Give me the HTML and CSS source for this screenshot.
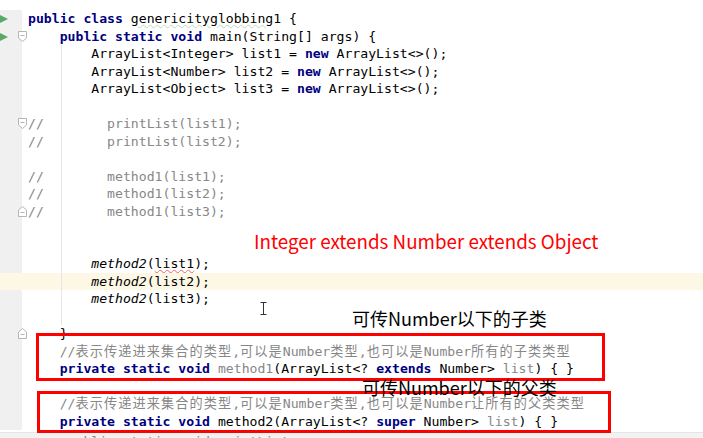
FILE: index.html
```html
<!DOCTYPE html>
<html lang="en">
<head>
    <meta charset="UTF-8">
    <meta name="viewport" content="width=device-width, initial-scale=1.0">
    <title>genericityglobbing1</title>
    <link rel="stylesheet" href="styles.css">
</head>
<body>
    <div class="editor">
        <div class="line">
            <span class="gut"><svg class="run" width="8" height="8" viewBox="0 0 8 8"><path d="M0 0 L8 4 L0 8 Z"/></svg></span>
            <span class="code"><b>public class</b> <span class="typo">genericityglobbing</span>1 {</span>
        </div>
        <div class="line">
            <span class="gut"><svg class="run" width="8" height="8" viewBox="0 0 8 8"><path d="M0 0 L8 4 L0 8 Z"/></svg><svg class="fold" width="9" height="11" viewBox="0 0 9 11"><path d="M0.5 0.5 H8.5 V7 L4.5 10.5 L0.5 7 Z"/><path d="M2.5 4.5 H6.5"/></svg></span>
            <span class="code">    <b>public static void</b> main(String[] args) {</span>
        </div>
        <div class="line g"><span class="gut"></span><span class="code">        ArrayList&lt;Integer&gt; list1 = <b>new</b> ArrayList&lt;&gt;();</span></div>
        <div class="line g"><span class="gut"></span><span class="code">        ArrayList&lt;Number&gt; list2 = <b>new</b> ArrayList&lt;&gt;();</span></div>
        <div class="line g"><span class="gut"></span><span class="code">        ArrayList&lt;Object&gt; list3 = <b>new</b> ArrayList&lt;&gt;();</span></div>
        <div class="line g"><span class="gut"></span><span class="code"> </span></div>
        <div class="line g">
            <span class="gut"><svg class="fold" width="9" height="11" viewBox="0 0 9 11"><path d="M0.5 0.5 H8.5 V7 L4.5 10.5 L0.5 7 Z"/><path d="M2.5 4.5 H6.5"/></svg></span>
            <span class="code rem">//        printList(list1);</span>
        </div>
        <div class="line g"><span class="gut"></span><span class="code rem">//        printList(list2);</span></div>
        <div class="line g"><span class="gut"></span><span class="code"> </span></div>
        <div class="line g"><span class="gut"></span><span class="code rem">//        method1(list1);</span></div>
        <div class="line g"><span class="gut"></span><span class="code rem">//        method1(list2);</span></div>
        <div class="line g">
            <span class="gut"><svg class="fold" width="9" height="11" viewBox="0 0 9 11"><path d="M0.5 10.5 H8.5 V4 L4.5 0.5 L0.5 4 Z"/><path d="M2.5 6.5 H6.5"/></svg></span>
            <span class="code rem">//        method1(list3);</span>
        </div>
        <div class="line g"><span class="gut"></span><span class="code"> </span></div>
        <div class="line g"><span class="gut"></span><span class="code"> </span></div>
        <div class="line g"><span class="gut"></span><span class="code">        <i>method2</i>(<span class="err">list1</span>);</span></div>
        <div class="line g caret"><span class="gut"></span><span class="code">        <i>method2</i>(list2);</span></div>
        <div class="line g"><span class="gut"></span><span class="code">        <i>method2</i>(list3);</span></div>
        <div class="line g"><span class="gut"></span><span class="code"> </span></div>
        <div class="line">
            <span class="gut"><svg class="fold" width="9" height="11" viewBox="0 0 9 11"><path d="M0.5 10.5 H8.5 V4 L4.5 0.5 L0.5 4 Z"/><path d="M2.5 6.5 H6.5"/></svg></span>
            <span class="code">    }</span>
        </div>
        <div class="line"><span class="gut"></span><span class="code rem">    //<span class="cn">表示传递进来集合的类型</span>,<span class="cn">可以是</span>Number<span class="cn">类型</span>,<span class="cn">也可以是</span>Number<span class="cn">所有的子类类型</span></span></div>
        <div class="line"><span class="gut"></span><span class="code">    <b>private static void</b> <span class="dim">method1</span>(ArrayList&lt;? <b>extends</b> Number&gt; <span class="dim">list</span>) { }</span></div>
        <div class="line"><span class="gut"></span><span class="code"> </span></div>
        <div class="line"><span class="gut"></span><span class="code rem">    //<span class="cn">表示传递进来集合的类型</span>,<span class="cn">可以是</span>Number<span class="cn">类型</span>,<span class="cn">也可以是</span>Number<span class="cn">让所有的父类类型</span></span></div>
        <div class="line"><span class="gut"></span><span class="code">    <b>private static void</b> method2(ArrayList&lt;? <b>super</b> Number&gt; <span class="dim">list</span>) { }</span></div>
        <div class="line last"><span class="gut"></span><span class="code rem">     public static void printList</span></div>

        <div class="box box-one"></div>
        <div class="box box-two"></div>
        <div class="note note-red">Integer extends Number extends Object</div>
        <div class="note note-sub">可传Number以下的子类</div>
        <div class="note note-super">可传Number以下的父类</div>
        <svg class="ibeam" width="7" height="13" viewBox="0 0 7 13"><path d="M0.5 0.5 H6.5 M3.5 0.5 V12.5 M0.5 12.5 H6.5"/></svg>
    </div>
</body>
</html>
```

FILE: styles.css
```css
html, body {
    margin: 0;
    padding: 0;
    background: #fff;
}
body {
    width: 703px;
    height: 438px;
    overflow: hidden;
}
.editor {
    position: relative;
    padding-top: 10px;
    font-family: "DejaVu Sans Mono", "Noto Sans CJK SC", monospace;
    font-size: 13.15px;
    color: #000;
}
.line {
    display: flex;
    height: 17.52px;
    line-height: 17.52px;
}
.line .gut {
    position: relative;
    flex: none;
    width: 22px;
    background: #f0f0f0;
}
.line .code {
    flex: 1;
    padding-left: 6px;
    white-space: pre;
}
.line.g .code {
    background-image: linear-gradient(to right, transparent 39px, #e6e6e6 39px, #e6e6e6 40px, transparent 40px);
}
.line.caret .gut,
.line.caret .code {
    background-color: #fdf8e6;
}
.line.last .gut,
.line.last .code {
    margin-top: 2px;
    background: #f2f2f2;
    border-top: 1px solid #e4e4e4;
}
.code b {
    color: #000080;
    font-weight: bold;
}
.code i {
    font-style: italic;
}
.rem,
.dim {
    color: #878787;
}
.cn {
    letter-spacing: 1.1px;
}
.typo {
    text-decoration: underline wavy #b8dcb8;
    text-decoration-thickness: 1px;
}
.err {
    text-decoration: underline wavy #f06060;
    text-decoration-thickness: 1px;
}
.run {
    position: absolute;
    left: 0;
    top: 5px;
    fill: #59a869;
}
.fold {
    position: absolute;
    right: -5px;
    top: 3px;
    fill: #fff;
    stroke: #b5b5b5;
    stroke-width: 1;
}

/* annotations drawn over the screenshot */
.box {
    position: absolute;
    box-sizing: border-box;
    border: 3px solid #f00;
}
.box-one {
    left: 36px;
    top: 333px;
    width: 569px;
    height: 48px;
}
.box-two {
    left: 37px;
    top: 391px;
    width: 574px;
    height: 42px;
}
.note {
    position: absolute;
    font-family: "Noto Sans CJK SC", sans-serif;
    line-height: 1;
    white-space: nowrap;
}
.note-red {
    left: 254px;
    top: 232px;
    font-size: 18.8px;
    color: #f00;
}
.note-sub {
    left: 352px;
    top: 309px;
    font-size: 18px;
    color: #000;
}
.note-super {
    left: 362px;
    top: 378px;
    font-size: 18px;
    color: #000;
}
.ibeam {
    position: absolute;
    left: 260px;
    top: 302px;
    fill: none;
    stroke: #333;
    stroke-width: 1;
}
```
